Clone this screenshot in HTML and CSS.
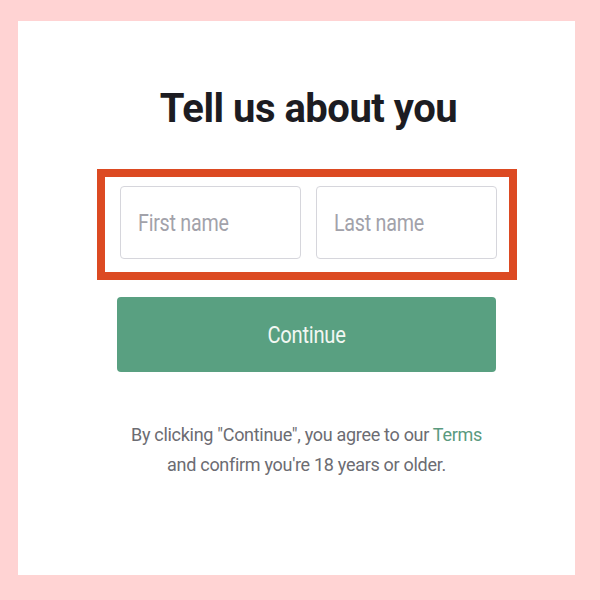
FILE: index.html
```html
<!DOCTYPE html>
<html>
<head>
<meta charset="utf-8">
<link rel="stylesheet" href="styles.css">
</head>
<body>
<div class="panel">
  <h1 class="title">Tell us about you</h1>
  <div class="highlight">
    <div class="field"><span class="placeholder">First name</span></div>
    <div class="field"><span class="placeholder">Last name</span></div>
  </div>
  <div class="button"><span class="button-label">Continue</span></div>
  <p class="legal">By clicking "Continue", you agree to our <span class="link">Terms</span><br>and confirm you're 18 years or older.</p>
</div>
</body>
</html>
```
FILE: styles.css
```css
html, body {
  margin: 0;
  padding: 0;
  background: #ffd3d3;
  width: 600px;
  height: 600px;
  overflow: hidden;
}
body {
  padding-top: 21px;
  padding-left: 18px;
  box-sizing: border-box;
  font-family: Roboto, "Liberation Sans", sans-serif;
}
.panel {
  width: 557px;
  height: 554px;
  background: #ffffff;
  display: flex;
  flex-direction: column;
  align-items: center;
  padding-left: 20px;
  box-sizing: border-box;
}
.title {
  margin: 64px 0 0 0;
  font-size: 40px;
  line-height: 48px;
  font-weight: 700;
  color: #1c1c22;
  letter-spacing: -0.5px;
  padding-left: 4px;
}
.highlight {
  margin-top: 36px;
  width: 420px;
  height: 111px;
  box-sizing: border-box;
  border: 8px solid #dc4a22;
  display: flex;
  gap: 15px;
  padding: 9px 12px 0 15px;
}
.field {
  width: 181px;
  height: 73px;
  box-sizing: border-box;
  border: 1px solid #d6d6dc;
  border-radius: 4px;
  display: flex;
  align-items: center;
  padding-left: 17px;
}
.placeholder {
  display: inline-block;
  font-size: 24px;
  color: #a2a2aa;
  letter-spacing: -0.3px;
  transform: scaleX(0.82);
  transform-origin: left center;
  white-space: nowrap;
}
.button {
  margin-top: 17px;
  width: 379px;
  height: 75px;
  background: #59a081;
  border-radius: 4px;
  display: flex;
  align-items: center;
  justify-content: center;
}
.button-label {
  display: inline-block;
  color: #f2f7f2;
  font-size: 24px;
  letter-spacing: -0.3px;
  transform: scaleX(0.84);
}
.legal {
  margin: 48px 0 0 0;
  text-align: center;
  font-size: 18px;
  line-height: 30px;
  color: #6c6c72;
  letter-spacing: -0.3px;
}
.link {
  color: #5a9a7e;
}
```
